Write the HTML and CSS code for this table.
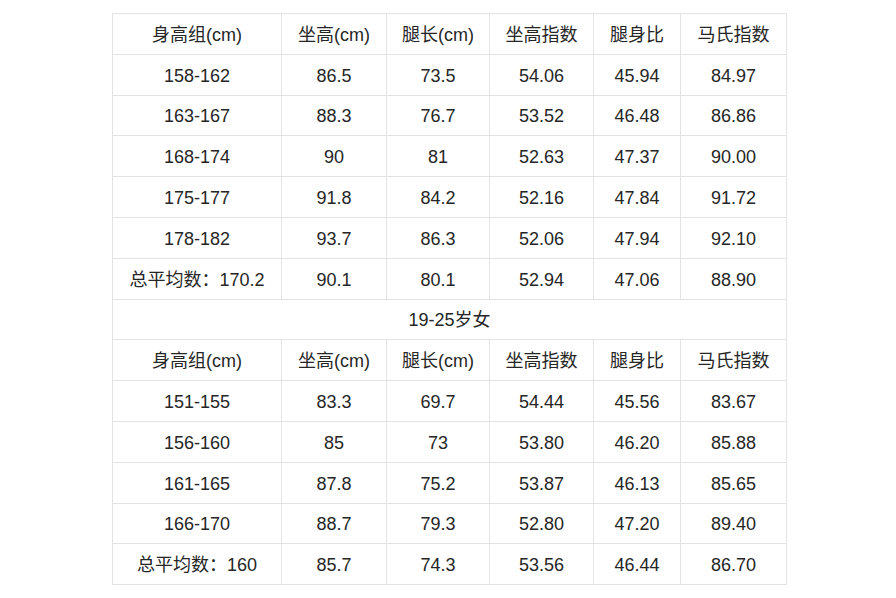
FILE: index.html
```html
<!DOCTYPE html>
<html lang="zh">
<head>
<meta charset="utf-8">
<link rel="stylesheet" href="styles.css">
</head>
<body>
<div class="page">
<table class="data">
<colgroup>
<col class="c1"><col class="c2"><col class="c3"><col class="c4"><col class="c5"><col class="c6">
</colgroup>
<tbody>
<tr><td>身高组(cm)</td><td>坐高(cm)</td><td>腿长(cm)</td><td>坐高指数</td><td>腿身比</td><td>马氏指数</td></tr>
<tr><td>158-162</td><td>86.5</td><td>73.5</td><td>54.06</td><td>45.94</td><td>84.97</td></tr>
<tr><td>163-167</td><td>88.3</td><td>76.7</td><td>53.52</td><td>46.48</td><td>86.86</td></tr>
<tr><td>168-174</td><td>90</td><td>81</td><td>52.63</td><td>47.37</td><td>90.00</td></tr>
<tr><td>175-177</td><td>91.8</td><td>84.2</td><td>52.16</td><td>47.84</td><td>91.72</td></tr>
<tr><td>178-182</td><td>93.7</td><td>86.3</td><td>52.06</td><td>47.94</td><td>92.10</td></tr>
<tr><td>总平均数：170.2</td><td>90.1</td><td>80.1</td><td>52.94</td><td>47.06</td><td>88.90</td></tr>
<tr><td colspan="6" class="title">19-25岁女</td></tr>
<tr><td>身高组(cm)</td><td>坐高(cm)</td><td>腿长(cm)</td><td>坐高指数</td><td>腿身比</td><td>马氏指数</td></tr>
<tr><td>151-155</td><td>83.3</td><td>69.7</td><td>54.44</td><td>45.56</td><td>83.67</td></tr>
<tr><td>156-160</td><td>85</td><td>73</td><td>53.80</td><td>46.20</td><td>85.88</td></tr>
<tr><td>161-165</td><td>87.8</td><td>75.2</td><td>53.87</td><td>46.13</td><td>85.65</td></tr>
<tr><td>166-170</td><td>88.7</td><td>79.3</td><td>52.80</td><td>47.20</td><td>89.40</td></tr>
<tr><td>总平均数：160</td><td>85.7</td><td>74.3</td><td>53.56</td><td>46.44</td><td>86.70</td></tr>
</tbody>
</table>
</div>
</body>
</html>
```
FILE: styles.css
```css
html, body {
  margin: 0;
  padding: 0;
  background: #ffffff;
}
.page {
  padding: 13px 0 0 112px;
}
.data {
  border-collapse: collapse;
  table-layout: fixed;
  width: 674px;
  font-family: "Liberation Sans", "Noto Sans CJK SC", sans-serif;
  font-size: 18px;
  line-height: 20px;
  color: #262626;
}
.c1 { width: 169px; }
.c2 { width: 105px; }
.c3 { width: 103px; }
.c4 { width: 104px; }
.c5 { width: 87px; }
.c6 { width: 106px; }
.data td {
  border: 1px solid #e3e3e3;
  height: 37.8px;
  padding: 2px 0 0 0;
  text-align: center;
  vertical-align: middle;
  white-space: nowrap;
}
```
